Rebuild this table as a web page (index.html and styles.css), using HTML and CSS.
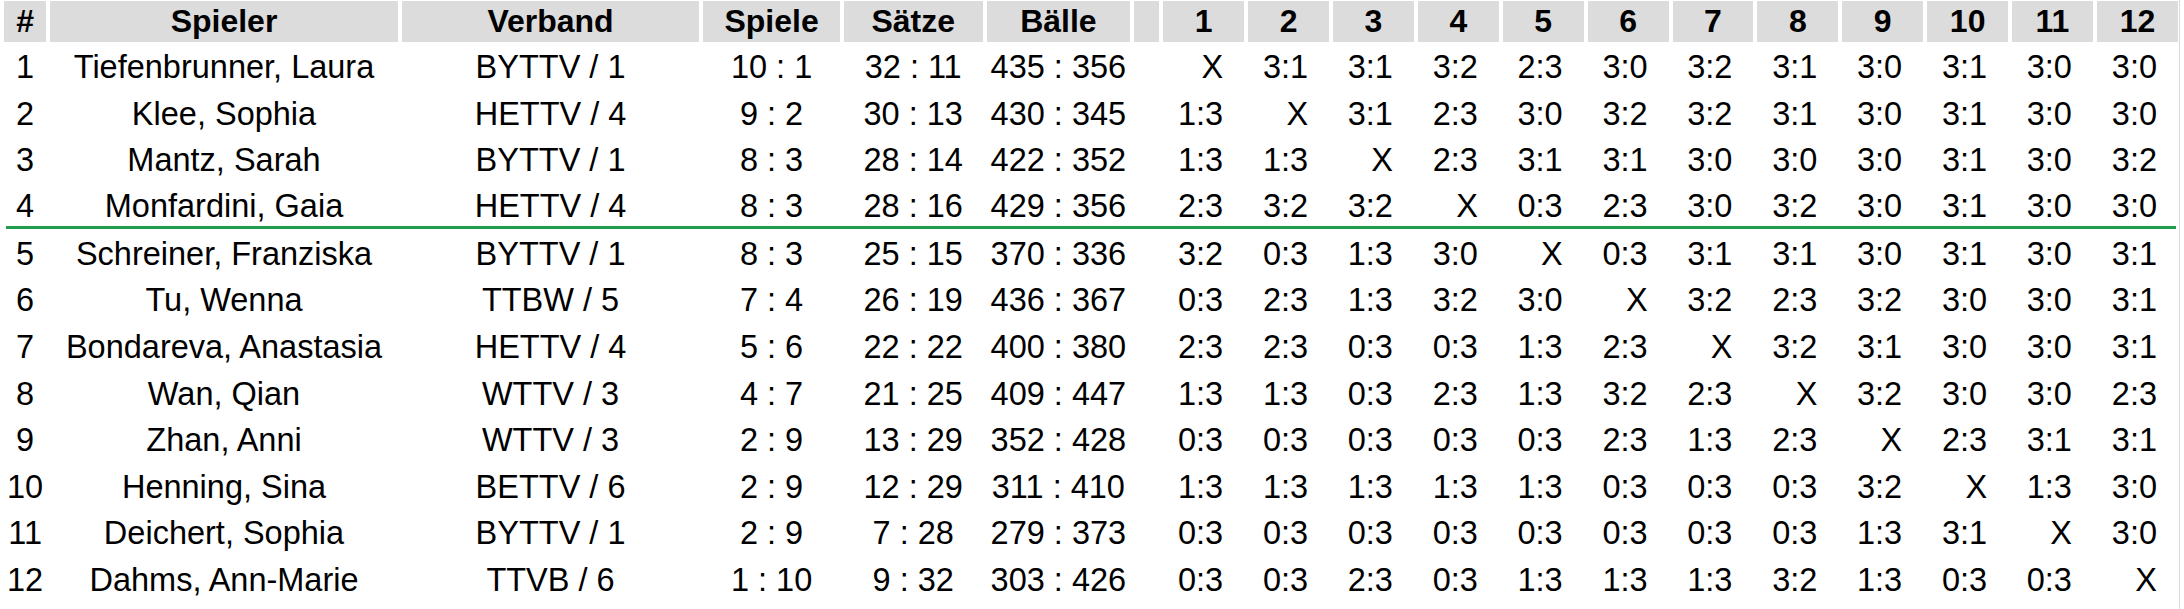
FILE: index.html
```html
<!DOCTYPE html>
<html lang="de">
<head>
<meta charset="utf-8">
<title>Tabelle</title>
<link rel="stylesheet" href="styles.css">
</head>
<body>
<div class="wrap">
<table class="standings">
<thead>
<tr>
<th class="c-rank">#</th>
<th class="c-name">Spieler</th>
<th class="c-club">Verband</th>
<th class="c-games">Spiele</th>
<th class="c-sets">Sätze</th>
<th class="c-balls">Bälle</th>
<th class="c-blank"></th>
<th class="c-res">1</th><th class="c-res">2</th><th class="c-res">3</th><th class="c-res">4</th><th class="c-res">5</th><th class="c-res">6</th><th class="c-res">7</th><th class="c-res">8</th><th class="c-res">9</th><th class="c-res">10</th><th class="c-res">11</th><th class="c-res">12</th>
</tr>
</thead>
<tbody>
<tr><td>1</td><td>Tiefenbrunner, Laura</td><td>BYTTV / 1</td><td>10 : 1</td><td>32 : 11</td><td>435 : 356</td><td></td><td class="r">X</td><td class="r">3:1</td><td class="r">3:1</td><td class="r">3:2</td><td class="r">2:3</td><td class="r">3:0</td><td class="r">3:2</td><td class="r">3:1</td><td class="r">3:0</td><td class="r">3:1</td><td class="r">3:0</td><td class="r">3:0</td></tr>
<tr><td>2</td><td>Klee, Sophia</td><td>HETTV / 4</td><td>9 : 2</td><td>30 : 13</td><td>430 : 345</td><td></td><td class="r">1:3</td><td class="r">X</td><td class="r">3:1</td><td class="r">2:3</td><td class="r">3:0</td><td class="r">3:2</td><td class="r">3:2</td><td class="r">3:1</td><td class="r">3:0</td><td class="r">3:1</td><td class="r">3:0</td><td class="r">3:0</td></tr>
<tr><td>3</td><td>Mantz, Sarah</td><td>BYTTV / 1</td><td>8 : 3</td><td>28 : 14</td><td>422 : 352</td><td></td><td class="r">1:3</td><td class="r">1:3</td><td class="r">X</td><td class="r">2:3</td><td class="r">3:1</td><td class="r">3:1</td><td class="r">3:0</td><td class="r">3:0</td><td class="r">3:0</td><td class="r">3:1</td><td class="r">3:0</td><td class="r">3:2</td></tr>
<tr class="cut"><td>4</td><td>Monfardini, Gaia</td><td>HETTV / 4</td><td>8 : 3</td><td>28 : 16</td><td>429 : 356</td><td></td><td class="r">2:3</td><td class="r">3:2</td><td class="r">3:2</td><td class="r">X</td><td class="r">0:3</td><td class="r">2:3</td><td class="r">3:0</td><td class="r">3:2</td><td class="r">3:0</td><td class="r">3:1</td><td class="r">3:0</td><td class="r">3:0</td></tr>
<tr class="sep"><td colspan="19"><div class="line"></div></td></tr>
<tr><td>5</td><td>Schreiner, Franziska</td><td>BYTTV / 1</td><td>8 : 3</td><td>25 : 15</td><td>370 : 336</td><td></td><td class="r">3:2</td><td class="r">0:3</td><td class="r">1:3</td><td class="r">3:0</td><td class="r">X</td><td class="r">0:3</td><td class="r">3:1</td><td class="r">3:1</td><td class="r">3:0</td><td class="r">3:1</td><td class="r">3:0</td><td class="r">3:1</td></tr>
<tr><td>6</td><td>Tu, Wenna</td><td>TTBW / 5</td><td>7 : 4</td><td>26 : 19</td><td>436 : 367</td><td></td><td class="r">0:3</td><td class="r">2:3</td><td class="r">1:3</td><td class="r">3:2</td><td class="r">3:0</td><td class="r">X</td><td class="r">3:2</td><td class="r">2:3</td><td class="r">3:2</td><td class="r">3:0</td><td class="r">3:0</td><td class="r">3:1</td></tr>
<tr><td>7</td><td>Bondareva, Anastasia</td><td>HETTV / 4</td><td>5 : 6</td><td>22 : 22</td><td>400 : 380</td><td></td><td class="r">2:3</td><td class="r">2:3</td><td class="r">0:3</td><td class="r">0:3</td><td class="r">1:3</td><td class="r">2:3</td><td class="r">X</td><td class="r">3:2</td><td class="r">3:1</td><td class="r">3:0</td><td class="r">3:0</td><td class="r">3:1</td></tr>
<tr><td>8</td><td>Wan, Qian</td><td>WTTV / 3</td><td>4 : 7</td><td>21 : 25</td><td>409 : 447</td><td></td><td class="r">1:3</td><td class="r">1:3</td><td class="r">0:3</td><td class="r">2:3</td><td class="r">1:3</td><td class="r">3:2</td><td class="r">2:3</td><td class="r">X</td><td class="r">3:2</td><td class="r">3:0</td><td class="r">3:0</td><td class="r">2:3</td></tr>
<tr><td>9</td><td>Zhan, Anni</td><td>WTTV / 3</td><td>2 : 9</td><td>13 : 29</td><td>352 : 428</td><td></td><td class="r">0:3</td><td class="r">0:3</td><td class="r">0:3</td><td class="r">0:3</td><td class="r">0:3</td><td class="r">2:3</td><td class="r">1:3</td><td class="r">2:3</td><td class="r">X</td><td class="r">2:3</td><td class="r">3:1</td><td class="r">3:1</td></tr>
<tr><td>10</td><td>Henning, Sina</td><td>BETTV / 6</td><td>2 : 9</td><td>12 : 29</td><td>311 : 410</td><td></td><td class="r">1:3</td><td class="r">1:3</td><td class="r">1:3</td><td class="r">1:3</td><td class="r">1:3</td><td class="r">0:3</td><td class="r">0:3</td><td class="r">0:3</td><td class="r">3:2</td><td class="r">X</td><td class="r">1:3</td><td class="r">3:0</td></tr>
<tr><td>11</td><td>Deichert, Sophia</td><td>BYTTV / 1</td><td>2 : 9</td><td>7 : 28</td><td>279 : 373</td><td></td><td class="r">0:3</td><td class="r">0:3</td><td class="r">0:3</td><td class="r">0:3</td><td class="r">0:3</td><td class="r">0:3</td><td class="r">0:3</td><td class="r">0:3</td><td class="r">1:3</td><td class="r">3:1</td><td class="r">X</td><td class="r">3:0</td></tr>
<tr><td>12</td><td>Dahms, Ann-Marie</td><td>TTVB / 6</td><td>1 : 10</td><td>9 : 32</td><td>303 : 426</td><td></td><td class="r">0:3</td><td class="r">0:3</td><td class="r">2:3</td><td class="r">0:3</td><td class="r">1:3</td><td class="r">1:3</td><td class="r">1:3</td><td class="r">3:2</td><td class="r">1:3</td><td class="r">0:3</td><td class="r">0:3</td><td class="r">X</td></tr>
</tbody>
</table>
</div>
</body>
</html>
```
FILE: styles.css
```css
html, body {
  margin: 0;
  padding: 0;
  background: #ffffff;
}

body {
  font-family: "Liberation Sans", Arial, sans-serif;
  color: #000000;
}

.wrap {
  width: 2179px;
  height: 609px;
  overflow: hidden;
  border-right: 1px solid #d9d9d9;
}

.standings {
  table-layout: fixed;
  width: 2182px;
  border-collapse: separate;
  border-spacing: 4.5px 0;
  margin-top: 1px;
  font-size: 32.5px;
}

.standings th {
  box-sizing: border-box;
  height: 41px;
  padding: 0;
  background: #dcdcdc;
  font-weight: bold;
  font-size: 32px;
  text-align: center;
  vertical-align: middle;
  line-height: 41px;
  white-space: nowrap;
}

.c-rank { width: 42px; }
.c-name { width: 346px; }
.c-club { width: 296px; }
.c-games { width: 136px; }
.c-sets { width: 138px; }
.c-balls { width: 143px; }
.c-blank { width: 25px; }
.c-res { width: 80.5px; }

.standings td {
  box-sizing: border-box;
  height: 46.55px;
  padding: 4px 0 0 0;
  text-align: center;
  vertical-align: middle;
  white-space: nowrap;
  line-height: 36px;
}

.standings td.r {
  text-align: right;
  padding-right: 21px;
}

.standings tr.cut td {
  height: 44px;
}

.standings tr.sep td {
  height: 3px;
  padding: 0 2px;
  line-height: 0;
}

.line {
  height: 3px;
  background: #1f9d4c;
}
```
